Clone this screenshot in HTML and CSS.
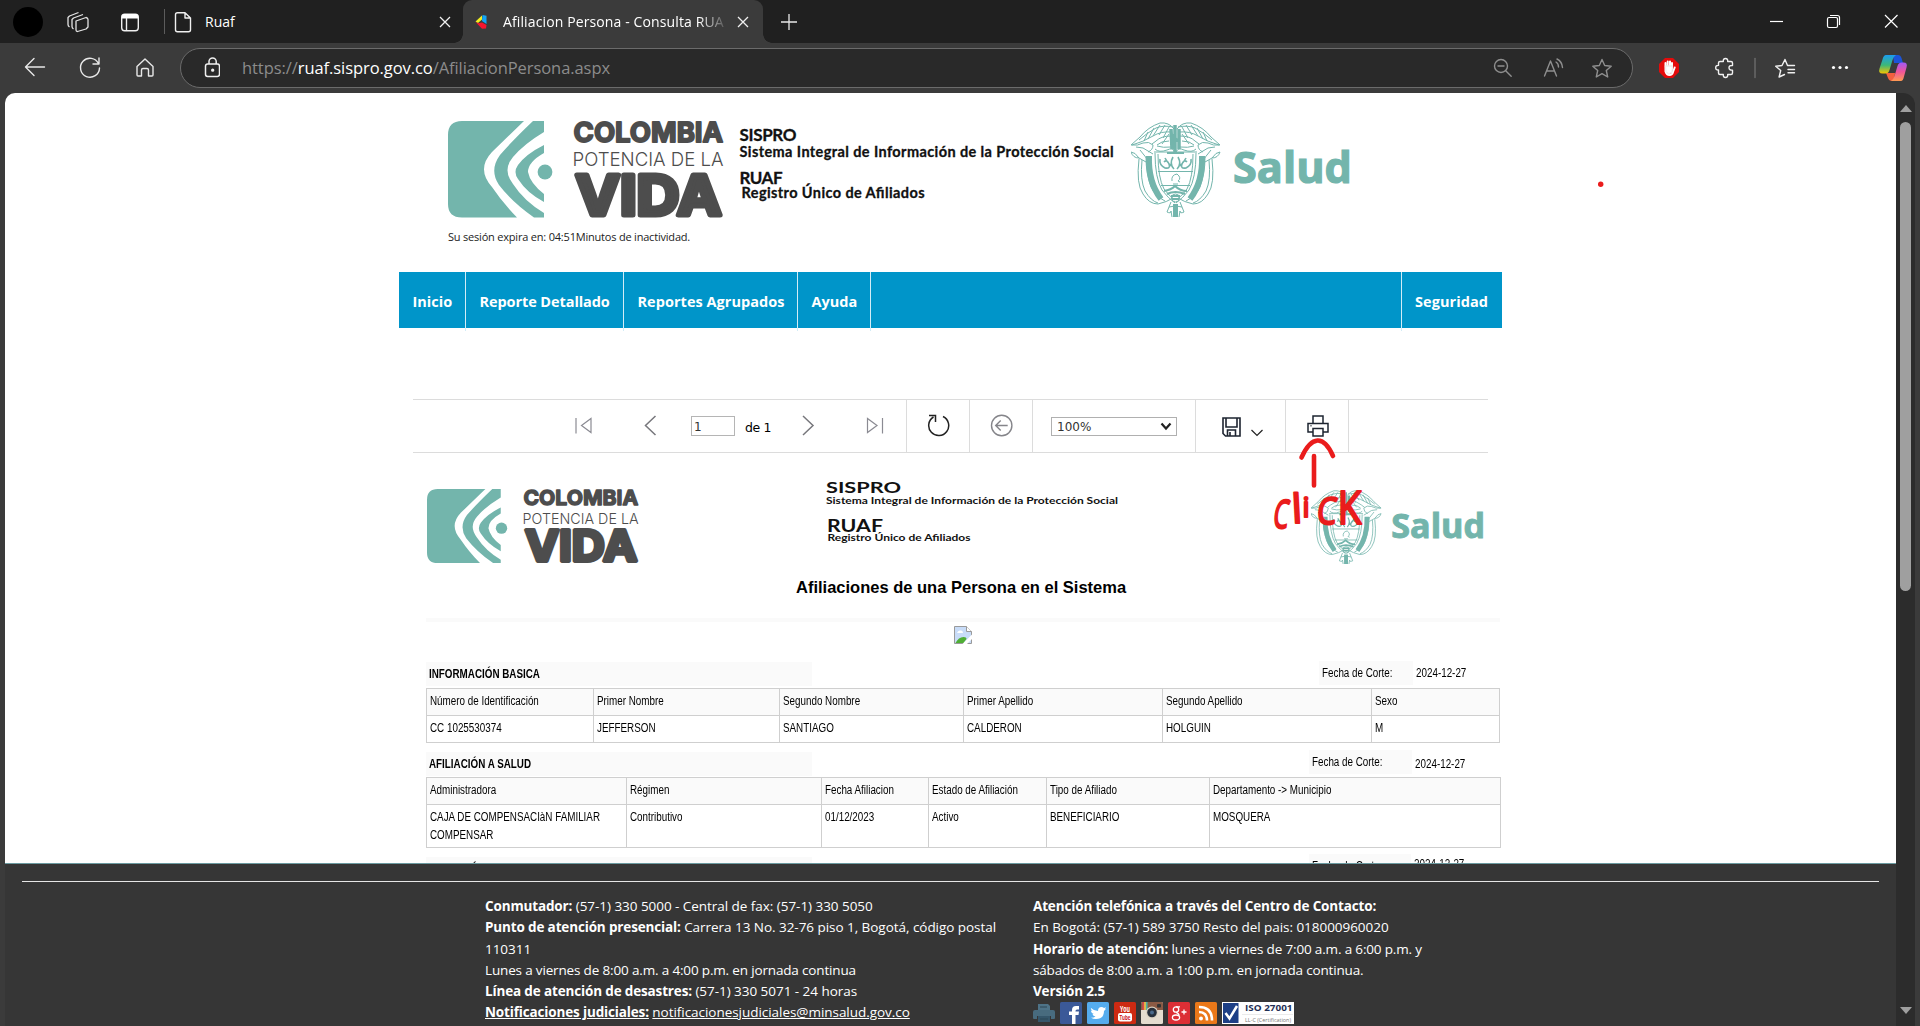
FILE: index.html
```html
<!DOCTYPE html>
<html lang="es">
<head>
<meta charset="utf-8">
<title>Afiliacion Persona - Consulta RUAF</title>
<link rel="stylesheet" href="styles.css">
</head>
<body>
<svg class="defs" width="0" height="0">
  <symbol id="logo-vida" viewBox="0 0 276 97">
    <g fill="#73b5ac">
      <path d="M14 0H76L44 31Q28 48 44 66Q54 81 69 96.500H14Q0 96.500 0 83V14Q0 0 14 0Z"/>
      <path d="M96 0V11Q76 23 65 36Q54 49 65 63Q76 80 96 92V96.500H86Q64 81 51 64Q41 49 52 34Q64 20 85 0Z"/>
      <path d="M96 24V32Q80 41 80 51Q82 62 96 73V81Q79 72 70 58Q65 51 70 44Q78 33 96 24Z"/>
      <circle cx="97" cy="51" r="7.400"/>
    </g>
    <g class="logo-text">
      <text class="lt-heavy" x="125.600" y="20.800" font-size="27" textLength="149.500" lengthAdjust="spacingAndGlyphs" stroke-width="1.800">COLOMBIA</text>
      <text class="lt-light" x="124.500" y="45.300" font-size="19.300" textLength="151" lengthAdjust="spacingAndGlyphs">POTENCIA DE LA</text>
      <text class="lt-heavy" x="127.500" y="94.300" font-size="54.500" textLength="146" lengthAdjust="spacingAndGlyphs" stroke-width="5">VIDA</text>
    </g>
  </symbol>
  <symbol id="logo-salud" viewBox="0 0 221 95">
    <g fill="none" stroke="#73b5ac" stroke-width="1">
      <g id="emb-half">
        <path d="M43 7Q38 0 29 1Q17 5 9 15L0 23Q7 24 12 21Q18 19 22 23Q22 28 17 30M41 10Q30 9 22 14Q12 20 1 23M42 5Q32 3 25 6Q16 11 8 18M40 14Q30 14 25 19L21 22M38 19Q30 19 26 23M26 24Q32 26 40 25M34 3L28 13M29 3L22 14M23 6L17 17M38 5L32 16M17 10L13 19M38 12L31 22"/>
        <path d="M24 27Q28 31 36 28Q42 25 44 30M23 30H44"/>
        <path d="M0 30Q4 30 8 36Q2 36 0 30ZM8 36L15 40M5 25L12 26L22 32M9 28L17 38"/>
        <path d="M8 37Q5 62 12 72Q18 82 27 82Q36 80 42 76M11 38Q9 58 14 69Q20 79 27 81"/>
        <path d="M15 35Q15 52 20 65Q24 74 34 79" />
        <path d="M18 34Q17 60 30 77" stroke-width="6"/>
        <path d="M24 31Q24 56 31 68Q37 76 44 81M27 32Q27 56 33 67Q38 74 44 78"/>
        <path d="M29 37Q28 43 34 46Q40 47 38 42Q36 37 33 40M42 35Q38 42 43 47M34 36Q36 40 40 44" stroke-width="1.600"/>
        <path d="M40 80L36 90Q40 92 40 89L41 95M38 85L44 84"/>
      </g>
      <use href="#emb-half" transform="translate(89 0) scale(-1 1)"/>
      <path d="M27 49.500H62M30 63.500H59M41 59Q40 53 46 52Q51 56 47 59L49 60M42 62H47"/>
      <path d="M33 69Q40 68 44 64Q49 69 56 69M36 72Q44 68 54 72" stroke-width="2"/>
      <circle cx="44.500" cy="76" r="4"/>
      <path d="M44.500 82V95" stroke-width="5"/>
      <path d="M40 74H49M41 77H48M36 31H53" stroke-width="2"/>
      <path d="M40 7L41 27M44 3V32M48 7L48 27M42 12L46 20" stroke-width="3.500"/>
    </g>
    <text class="salud-text" x="102" y="61" font-size="43" textLength="119" lengthAdjust="spacingAndGlyphs">Salud</text>
  </symbol>
</svg>

<div class="window">
  <header class="tabstrip">
    <span class="avatar"></span>
    <svg class="ic" width="24" height="42" viewBox="66 0 24 42"><g fill="none" stroke="#e4e4e4" stroke-width="1.300" stroke-linejoin="round"><path d="M76 20L86 16.500Q88 17 88 18.500V26L86 28L77.500 30.500Q76 30.500 76 29Z"/><path d="M73.500 28Q72 27 72 25.500V18.500L73.500 17L83 13.500"/><path d="M69.500 26Q68 25 68 23.500V16.500L69.500 15L78.500 11.500"/></g></svg>
    <svg class="ic" width="20" height="42" viewBox="120 0 20 42"><rect x="121.700" y="13.200" width="16.600" height="16.600" rx="3" fill="none" stroke="#f0f0f0" stroke-width="1.400"/><path d="M121.700 17.500V16q0-3 3-3h10.600q3 0 3 3v1.500z" fill="#fff"/><path d="M126.500 17v13" stroke="#f0f0f0" stroke-width="1.400"/></svg>
    <i class="strip-sep"></i>
    <div class="tab tab-idle">
      <svg width="18" height="22" viewBox="174 11 18 22"><path d="M185 12.700h-7.500q-2 0-2 2v15q0 2 2 2h11q2 0 2-2V18zM185 12.700V18h5.500" fill="none" stroke="#f0f0f0" stroke-width="1.400" stroke-linejoin="round"/></svg>
      <span class="tab-title">Ruaf</span>
      <svg class="x" width="12" height="12" viewBox="0 0 12 12"><path d="M1 1l10 10M11 1L1 11" stroke="#f0f0f0" stroke-width="1.300"/></svg>
    </div>
    <div class="tab tab-active">
      <svg width="14" height="16" viewBox="0 0 14 16"><path d="M8 1.500L1.500 7.500 4 9l4-3.500z" fill="#f0ee20"/><path d="M8.500 1L12.500 1.800V10L8 7z" fill="#12a5f5"/><path d="M1.500 8L4 9.300 8 8.500l4.500 2.500-.5 3.500-4 .3z" fill="#f5152f"/></svg>
      <span class="tab-title fade">Afiliacion Persona - Consulta RUA</span>
      <svg class="x" width="12" height="12" viewBox="0 0 12 12"><path d="M1 1l10 10M11 1L1 11" stroke="#f0f0f0" stroke-width="1.300"/></svg>
    </div>
    <svg class="plus" width="18" height="18" viewBox="0 0 18 18"><path d="M9 1v16M1 9h16" stroke="#e8e8e8" stroke-width="1.300"/></svg>
    <svg class="winbtns" width="132" height="16" viewBox="0 0 132 16" fill="none" stroke="#fff" stroke-width="1.200"><path d="M1 7.500h13"/><rect x="58.500" y="3.500" width="10" height="10" rx="1.500"/><path d="M61 1.500h7.500q2 0 2 2V11"/><path d="M116 1l12.500 12.500M128.500 1L116 13.500"/></svg>
  </header>

  <div class="toolbar">
    <svg class="navbtns" width="140" height="26" viewBox="20 54 140 26" fill="none" stroke="#e8e8e8" stroke-width="1.400" stroke-linecap="round" stroke-linejoin="round"><path d="M44.500 67H25.500M34 58.500L25.500 67l8.500 8.500"/><path d="M98.500 63.500A9.500 9.500 0 1 0 99.500 68M99 58v6h-6"/><path d="M137 66.500L145 59l8 7.500V75q0 1-1 1h-3.500v-6q0-1.500-1.500-1.500h-4q-1.500 0-1.500 1.500v6H138q-1 0-1-1z"/></svg>
    <div class="address">
      <svg width="16" height="22" viewBox="203.500 57 16 22" fill="none" stroke="#f0f0f0" stroke-width="1.500"><rect x="205" y="64" width="14" height="12.500" rx="2.200"/><path d="M208.500 64v-2.500a3.600 3.600 0 0 1 7.200 0V64"/><circle cx="212.200" cy="70.200" r=".9" fill="#fff"/></svg>
      <span class="url">https://<b>ruaf.sispro.gov.co</b>/AfiliacionPersona.aspx</span>
      <svg class="addr-icons" width="120" height="22" viewBox="1492 57 120 22" fill="none" stroke="#8f8f8f" stroke-width="1.400" stroke-linecap="round" stroke-linejoin="round"><circle cx="1501" cy="66" r="6.500"/><path d="M1498 66h6M1505.700 70.700l5.500 5.500"/><path d="M1544.500 76l6-15 6 15M1546.500 71h8M1556 62q2.500 1.500 2.500 5M1557 59q5 2.500 5.500 8.500"/><path d="M1602 59.500l2.700 6 6.500.7-4.900 4.300 1.400 6.500-5.700-3.300-5.700 3.300 1.400-6.500-4.900-4.300 6.500-.7z"/></svg>
    </div>
    <svg class="exts" width="252" height="30" viewBox="1656 53 252 30" fill="none" stroke="#f0f0f0" stroke-width="1.400" stroke-linecap="round" stroke-linejoin="round">
      <path d="M1665 58h8l6 6v8l-6 6h-8l-6-6v-8z" fill="#e30b0b" stroke="none"/>
      <path d="M1665.500 66v5.500q1 3.500 4 3.500 2.800 0 3.500-3l1.700-4.500M1665.500 67v-4M1667.700 68v-6.500M1670 68v-6.500M1672 68v-5" stroke="#fff" stroke-width="2"/><path d="M1665.500 66h7l-.5 6-3 2-3-2z" fill="#fff"/>
      <path d="M1720 61.500h3.300q-.3-3 2.200-3t2.200 3h3.300q1.500 0 1.500 1.500v2.500q-3.500-.3-3.500 2.300t3.500 2.300V73q0 1.500-1.500 1.500h-3.300q.3 3-2.200 3t-2.200-3H1720q-1.500 0-1.500-1.500v-3q-2.800.2-2.800-2.300t2.800-2.300V63q0-1.500 1.500-1.500z"/>
      <path d="M1755 58.500v19" stroke="#666" stroke-width="1.600"/>
      <path d="M1791 65.500h-3.500l-2.500-6-3 6-6.300.7 5 4.300-1.600 6.500 5.400-2.500M1788 69.500h6.500M1788 72.800h6.500M1788 65.500h6.500"/>
      <g fill="#fff" stroke="none"><circle cx="1833.500" cy="67.500" r="1.600"/><circle cx="1840" cy="67.500" r="1.600"/><circle cx="1846.500" cy="67.500" r="1.600"/></g>
      <g stroke="none">
        <linearGradient id="cp1" x1="0" y1="0" x2="0" y2="1"><stop offset="0" stop-color="#1b9cf0"/><stop offset=".55" stop-color="#3cb878"/><stop offset="1" stop-color="#f5c400"/></linearGradient>
        <linearGradient id="cp2" x1="0" y1="0" x2="0" y2="1"><stop offset="0" stop-color="#a259f7"/><stop offset=".5" stop-color="#f0559a"/><stop offset="1" stop-color="#ff9a52"/></linearGradient>
        <path d="M1893 55h5q2.500 0 3.500 3l1.500 5h-9z" fill="#1c54d8"/>
        <path d="M1886 73h9l-1 8h-2q-3 0-4-3z" fill="#f3603e"/>
        <path d="M1885 55h11q-2.500 1.500-3.500 5l-3 10q-1 3.500-4 3.500h-3q-4.500 0-3-5l3-9q1-4.500 3.500-4.500z" fill="url(#cp1)"/>
        <path d="M1901 81h-10q2.500-1.500 3.500-5l3-10q1-3.500 4-3.500h2q4.500 0 3 5l-2.500 9q-1 4.500-3 4.500z" fill="url(#cp2)"/>
      </g>
    </svg>
  </div>

  <div class="viewport">
    <main class="page">
      <div class="content">
        <div class="banner">
          <svg class="b-vida" width="276" height="97"><use href="#logo-vida"/></svg>
          <svg class="b-text" width="376" height="97" viewBox="739 120 376 97"><text x="739.500" y="140.300" font-size="17" textLength="57">SISPRO</text><text x="739.500" y="155.800" font-size="14.500" textLength="374">Sistema Integral de Información de la Protección Social</text><text x="739.500" y="182.500" font-size="17" textLength="43">RUAF</text><text x="741.500" y="197.400" font-size="14.500" textLength="183">Registro Único de Afiliados</text></svg>
          <svg class="b-salud" width="221" height="95"><use href="#logo-salud"/></svg>
        </div>
        <p class="session">Su sesión expira en: 04:51Minutos de inactividad.</p>
        <nav class="menu">
          <a>Inicio</a><a>Reporte Detallado</a><a>Reportes Agrupados</a><a>Ayuda</a><span></span><a class="last">Seguridad</a>
        </nav>

        <div class="rv-bar">
          <div class="rv-group pages">
            <svg width="18" height="20" viewBox="575 416 18 20" fill="none" stroke="#8b8b93" stroke-width="1.200"><path d="M576 418v15.500M591 418.500v14l-9.500-7z"/></svg>
            <svg width="14" height="22" viewBox="644 415 14 22" fill="none" stroke="#77777c" stroke-width="1.500"><path d="M655.500 416L645.500 425.500l10 9.500"/></svg>
            <span class="page-input">1</span>
            <span class="page-of">de 1</span>
            <svg width="14" height="22" viewBox="801 415 14 22" fill="none" stroke="#77777c" stroke-width="1.500"><path d="M803 416L813 425.500l-10 9.500"/></svg>
            <svg width="18" height="20" viewBox="866 416 18 20" fill="none" stroke="#8b8b93" stroke-width="1.200"><path d="M882.500 418v15.500M867.500 418.500v14l9.500-7z"/></svg>
          </div>
          <div class="rv-group"><svg width="24" height="24" viewBox="925.500 414.500 24 24" fill="none" stroke="#222" stroke-width="1.500"><path d="M942.500 417A10 10 0 1 1 933 417.500M928.500 416h6.500v6.500" /></svg></div>
          <div class="rv-group"><svg width="24" height="24" viewBox="989.300 414 24 24" fill="none" stroke="#85858a" stroke-width="1.400"><circle cx="1002" cy="425.500" r="10.200"/><path d="M1008 425.500H996M1001 420.500l-5 5 5 5"/></svg></div>
          <div class="rv-group"><span class="zoom-select">100%<svg width="12" height="9" viewBox="0 0 12 9"><path d="M1.500 1.500L6 6.500l4.500-5" fill="none" stroke="#222" stroke-width="2.200"/></svg></span></div>
          <div class="rv-group save"><svg width="19" height="20" viewBox="0 0 19 20" fill="none" stroke="#1d2430" stroke-width="1.600"><path d="M1 1h17v18H3.500L1 16.500zM4 1v9h11V1M5.500 19v-6h8v6M8 15v4"/></svg><svg class="caret" width="12" height="8" viewBox="0 0 12 8"><path d="M.5 1L6 6.500 11.500 1" fill="none" stroke="#222" stroke-width="1.200"/></svg></div>
          <div class="rv-group print"><svg width="22" height="22" viewBox="0 0 22 22" fill="none" stroke="#1d2430" stroke-width="1.500"><path d="M6 8V1h10v7M6 17H1V8.500h20V17h-5M6 13.500h10V21H6zM3.500 10.800h1"/></svg></div>
          <div class="rv-group end"></div>
        </div>

        <section class="report">
          <div class="r-head">
            <svg class="r-vida" width="212" height="74.500"><use href="#logo-vida"/></svg>
            <svg class="r-text" width="294" height="66" viewBox="825 480 294 66"><text x="826" y="493.300" font-size="15.500" textLength="75" lengthAdjust="spacingAndGlyphs">SISPRO</text><text x="826" y="504.300" font-size="9.500" textLength="292" lengthAdjust="spacingAndGlyphs">Sistema Integral de Información de la Protección Social</text><text x="827" y="532.300" font-size="16.500" textLength="56" lengthAdjust="spacingAndGlyphs">RUAF</text><text x="827.500" y="541.300" font-size="9.500" textLength="143" lengthAdjust="spacingAndGlyphs">Registro Único de Afiliados</text></svg>
            <svg class="r-salud" width="174" height="74.800"><use href="#logo-salud"/></svg>
          </div>
          <h1>Afiliaciones de una Persona en el Sistema</h1>
          <div class="band"></div>
          <svg class="broken" width="18" height="18" viewBox="0 0 18 18"><path d="M.5.500h12l5 5v12H.5z" fill="#c8dcf8" stroke="#9a9a9a"/><path d="M1.500 17q3-6 8-6 3 0 3 2l-3 4z" fill="#4fae35"/><path d="M3 7q1-3 3.500-2.500Q9 4 9 7z" fill="#fff"/><path d="M12.500.500v5h5" fill="#fff" stroke="#9a9a9a"/><path d="M8.500 18L18 8.500V13l-5 5z" fill="#fff"/></svg>

          <div class="sec s1"><h2><span>INFORMACIÓN BASICA</span></h2><p class="cut"><span>Fecha de Corte:</span></p><p class="date"><span>2024-12-27</span></p></div>
          <div class="grid g1">
            <div class="hd"><span>Número de Identificación</span></div><div class="hd"><span>Primer Nombre</span></div><div class="hd"><span>Segundo Nombre</span></div><div class="hd"><span>Primer Apellido</span></div><div class="hd"><span>Segundo Apellido</span></div><div class="hd"><span>Sexo</span></div>
            <div><span>CC 1025530374</span></div><div><span>JEFFERSON</span></div><div><span>SANTIAGO</span></div><div><span>CALDERON</span></div><div><span>HOLGUIN</span></div><div><span>M</span></div>
          </div>
          <div class="sec s2"><h2><span>AFILIACIÓN A SALUD</span></h2><p class="cut"><span>Fecha de Corte:</span></p><p class="date"><span>2024-12-27</span></p></div>
          <div class="grid g2">
            <div class="hd"><span>Administradora</span></div><div class="hd"><span>Régimen</span></div><div class="hd"><span>Fecha Afiliacion</span></div><div class="hd"><span>Estado de Afiliación</span></div><div class="hd"><span>Tipo de Afiliado</span></div><div class="hd"><span>Departamento -&gt; Municipio</span></div>
            <div><span>CAJA DE COMPENSACIàN FAMILIAR<br>COMPENSAR</span></div><div><span>Contributivo</span></div><div><span>01/12/2023</span></div><div><span>Activo</span></div><div><span>BENEFICIARIO</span></div><div><span>MOSQUERA</span></div>
          </div>
          <div class="sec s3"><h2><span>AFILIACIÓN A PENSIONES</span></h2><p class="cut"><span>Fecha de Corte:</span></p><p class="date"><span>2024-12-27</span></p></div>
        </section>
      </div>

      <footer class="footer">
        <hr>
        <div class="f-cols">
          <div class="f-left">
            <p><b>Conmutador:</b> (57-1) 330 5000 - Central de fax: (57-1) 330 5050</p>
            <p><b>Punto de atención presencial:</b> Carrera 13 No. 32-76 piso 1, Bogotá, código postal</p>
            <p>110311</p>
            <p class="tight">Lunes a viernes de 8:00 a.m. a 4:00 p.m. en jornada continua</p>
            <p><b>Línea de atención de desastres:</b> (57-1) 330 5071 - 24 horas</p>
            <p><u><b>Notificaciones judiciales:</b></u> <u>notificacionesjudiciales@minsalud.gov.co</u></p>
          </div>
          <div class="f-right">
            <p><b>Atención telefónica a través del Centro de Contacto:</b></p>
            <p>En Bogotá: (57-1) 589 3750 Resto del pais: 018000960020</p>
            <p><b>Horario de atención:</b> <span class="tight">lunes a viernes de 7:00 a.m. a 6:00 p.m. y</span></p>
            <p class="tight">sábados de 8:00 a.m. a 1:00 p.m. en jornada continua.</p>
            <p><b>Versión 2.5</b></p>
            <div class="social">
              <svg viewBox="0 0 22 22"><path d="M5 2h10l2 2v4H5z" fill="#4e7388"/><path d="M2 8h18q2 0 2 2v6q0 1-1 1h-3v-3H4v3H1q-1 0-1-1v-6q0-2 2-2z" fill="#486b7e"/><path d="M5 14h12v6H5z" fill="#35566a"/><path d="M7 5h7M7 17h8" stroke="#2c4655"/></svg>
              <svg viewBox="0 0 22 22"><rect width="22" height="22" rx="1.500" fill="#3b5998"/><path d="M12 22v-9H9V9.500h3V8q0-4 4-4h3v3.500h-2q-1.500 0-1.500 1.500v.5H19l-.5 3.500h-3v9z" fill="#fff"/></svg>
              <svg viewBox="0 0 22 22"><rect width="22" height="22" rx="1.500" fill="#55acee"/><path d="M4 6q3 3 7 3 0-4 3.500-4 1.500 0 2.500 1l2-.7-1 2 1-.3-2 2q0 8-8 8-3 0-5-1.200 3 0 4.500-1.300-2.500-.5-3-2.500h1.500Q4 11 4 8.500l1.500.5Q3.500 7.500 4 6z" fill="#fff"/></svg>
              <svg viewBox="0 0 22 22"><rect width="22" height="22" rx="1.500" fill="#cd2a12"/><rect x="4" y="11" width="14" height="8.500" rx="2" fill="#fff"/><text x="6" y="9.500" font-size="8.500" textLength="10" lengthAdjust="spacingAndGlyphs" fill="#fff">You</text><text x="5.500" y="18" font-size="7.500" textLength="11" lengthAdjust="spacingAndGlyphs" fill="#cd201f">Tube</text></svg>
              <svg viewBox="0 0 22 22"><rect width="22" height="22" rx="1.500" fill="#e4dccf"/><path d="M0 8V1.500Q0 0 1.500 0h19Q22 0 22 1.500V8z" fill="#8b5a44"/><path d="M1.500 0h1.700v8H1.500z" fill="#e04848"/><path d="M3.200 0h1.700v8H3.200z" fill="#f0c84a"/><path d="M4.900 0h1.700v8H4.900z" fill="#4fb0a0"/><circle cx="11" cy="10.500" r="6" fill="#d8cfc0"/><circle cx="11" cy="10.500" r="4.800" fill="#26303c"/><circle cx="11" cy="10.500" r="2" fill="#4a6a8c"/><rect x="16" y="2" width="4" height="3.500" rx="1" fill="#333"/></svg>
              <svg viewBox="0 0 22 22"><rect width="22" height="22" rx="1.500" fill="#dc2f35"/><g fill="none" stroke="#fff" stroke-width="1.300"><circle cx="8" cy="7.500" r="2.700"/><ellipse cx="8" cy="15.500" rx="3.600" ry="2.500"/><path d="M8 4.800h4M8 10.300q3 1 3 3M13.500 10h5M16 7.500v5"/></g></svg>
              <svg viewBox="0 0 22 22"><rect width="22" height="22" rx="1.500" fill="#ea7819"/><circle cx="6" cy="16.500" r="2" fill="#fff"/><path d="M4 10q8 0 8 8.500M4 5q13 0 13 13.500" fill="none" stroke="#fff" stroke-width="2.600"/></svg>
              <svg class="iso" viewBox="0 0 72 22"><rect width="72" height="22" fill="#fff"/><rect x="1" y="1" width="15.500" height="20" fill="#1d3f86"/><path d="M3.500 11l4 5.500L15 4" fill="none" stroke="#fff" stroke-width="2.500"/><text x="23" y="8.700" font-size="9" textLength="47.500" lengthAdjust="spacingAndGlyphs" fill="#1f2f55">ISO 27001</text><path d="M20 12.500h51" stroke="#ddd" stroke-width=".6"/><text class="iso-s" x="23" y="19.500" font-size="5.500" textLength="46" lengthAdjust="spacingAndGlyphs" fill="#777">LL-C (Certification)</text></svg>
            </div>
          </div>
        </div>
      </footer>
    </main>
    <div class="scroll"><i class="up"></i><i class="thumb"></i><i class="down"></i></div>
  </div>

  <svg class="ink" width="340" height="360" viewBox="1265 175 340 360"><circle cx="1600.700" cy="184.300" r="2.700" fill="#ea1c1c"/><g fill="none" stroke="#ea1c1c" stroke-width="4.600" stroke-linecap="round"><path d="M1301.500 457.500Q1309 441 1317.500 440.500Q1326 440 1333 456M1314 456V485.500"/></g><g class="ink-text"><text transform="translate(1272 527.500) skewX(-8) scale(.62 1)" font-size="39">C</text><text transform="translate(1292.500 522.500) skewX(3)" font-size="40">l</text><text x="1302.500" y="517" font-size="28">i</text><text transform="translate(1316 524) skewX(-6) scale(.84 1)" font-size="37">C</text><text transform="translate(1337.500 524) scale(.85 1)" font-size="46">K</text></g></svg>
</div>
</body>
</html>
```
FILE: styles.css
```css
* { box-sizing: border-box; }
body { margin: 0; background: #3b3b3b; font-family: "Segoe UI", "Open Sans", "Noto Sans", sans-serif; }
p, h1, h2 { margin: 0; }
.defs { position: absolute; }
.window { position: relative; width: 1920px; height: 1026px; overflow: hidden; display: flex; flex-direction: column; background: #3b3b3b; }

/* tab strip */
.tabstrip { position: relative; height: 43px; background: #202020; display: flex; align-items: center; flex: none; }
.avatar { width: 30px; height: 30px; border-radius: 50%; background: #000; margin-left: 13px; }
.ic { margin-left: 23px; }
.ic + .ic { margin-left: 30px; }
.strip-sep { width: 1px; height: 25px; background: #5c5c5c; margin-left: 24px; }
.tab { display: flex; align-items: center; height: 43px; color: #fff; font-size: 14px; }
.tab-title { flex: 1; white-space: nowrap; overflow: hidden; margin-top: -1px; }
.tab-idle { width: 298px; padding: 0 12px 0 9px; }
.tab-idle .tab-title { margin-left: 13px; }
.tab-active { position: relative; width: 300px; padding: 0 14px 0 11px; background: #3b3b3b; border-radius: 9px 9px 0 0; }
.tab-active .tab-title { margin: -1px 12px 0 15px; letter-spacing: .12px; }
.tab-active::before, .tab-active::after { content: ""; position: absolute; bottom: 0; width: 9px; height: 9px; }
.tab-active::before { left: -9px; background: radial-gradient(circle at 0 0, transparent 8.5px, #3b3b3b 9px); }
.tab-active::after { right: -9px; background: radial-gradient(circle at 100% 0, transparent 8.5px, #3b3b3b 9px); }
.fade { -webkit-mask-image: linear-gradient(90deg, #000 88%, transparent 102%); mask-image: linear-gradient(90deg, #000 88%, transparent 102%); }
.plus { margin-left: 17px; }
.winbtns { margin-left: auto; margin-right: 19px; }

/* toolbar */
.toolbar { height: 50px; flex: none; display: flex; align-items: center; padding: 0 12px 0 20px; }
.navbtns { margin-top: -2px; }
.address { width: 1453px; height: 40px; margin-left: 20px; border: 1px solid #6b6b6b; border-radius: 20px; background: #292929; display: flex; align-items: center; padding: 0 20px 0 23px; }
.url { margin: -2px 0 0 22px; font-size: 16.500px; letter-spacing: -.07px; color: #8c8c8c; white-space: nowrap; }
.url b { font-weight: 400; color: #fff; }
.addr-icons { margin-left: auto; }
.exts { margin-left: 23px; }

/* page */
.viewport { flex: 1; display: flex; padding: 0 5px; min-height: 0; }
.page { width: 1891px; display: flex; flex-direction: column; background: #fff; border-radius: 10px 0 0 0; overflow: hidden; }
.content { height: 770px; overflow: hidden; padding-left: 394px; flex: none; }
.scroll { width: 19px; background: #2c2c2c; border-radius: 0 12px 0 0; display: flex; flex-direction: column; align-items: center; padding: 12px 0 12px; }
.up, .down { border: 6.500px solid transparent; border-top-width: 0; border-bottom: 7px solid #9f9f9f; }
.down { border-bottom: 0; border-top: 7px solid #9f9f9f; margin-top: auto; }
.thumb { width: 11px; height: 469px; margin-top: 10px; border-radius: 6px; background: #9f9f9f; }

.banner { display: flex; height: 130px; padding: 27.500px 0 0 49px; align-items: flex-start; }
.b-text { margin-left: 15px; }
.b-text text, .r-text text { font-family: Lato, "Noto Sans", sans-serif; font-weight: 700; fill: #111; }
.b-text text { stroke: #111; stroke-width: .3px; }
.b-salud { margin: 1px 0 0 16px; }
.logo-text { font-family: Inter, "Noto Sans", sans-serif; fill: #4d4d4d; stroke: #4d4d4d; stroke-linejoin: round; }
.lt-heavy { font-weight: 700; }
.lt-light { font-weight: 300; stroke: none; }
.salud-text { font-family: "Open Sans", "Noto Sans", sans-serif; font-weight: 700; fill: #73b5ac; stroke: #73b5ac; stroke-width: 1.2px; }
.session { font-size: 11px; letter-spacing: -.2px; line-height: 16px; height: 49px; padding: 6px 0 0 49px; color: #222; white-space: nowrap; }
.menu { width: 1103px; height: 56px; background: #0095c9; display: grid; grid-template-columns: 67px 158px 174px 73px 1fr 101px; align-items: stretch; }
.menu a { color: #fff; font-weight: 700; font-size: 14.500px; line-height: 59px; padding-left: 13.500px; border-right: 1px solid #d3ecf6; white-space: nowrap; }
.menu a:nth-child(2) { letter-spacing: -.08px; }
.menu a:nth-child(3) { letter-spacing: .04px; }
.menu a.last { border-right: 0; border-left: 1px solid #d3ecf6; padding-left: 13px; letter-spacing: .07px; }

/* report viewer bar */
.rv-bar { width: 1075px; height: 54px; margin: 71px 0 0 14px; border: solid #dcdcdc; border-width: 1px 0; display: grid; grid-template-columns: 494px 63px 63px 163px 90px 63px 1fr; }
.rv-group { border-right: 1px solid #dcdcdc; display: flex; align-items: center; justify-content: center; }
.rv-group.end { border: 0; }
.pages { justify-content: flex-start; padding-left: 162px; font: 12px "DejaVu Sans", sans-serif; }
.page-input { width: 44px; height: 20px; border: 1px solid #b5b5b5; margin: 0 10px 0 33px; padding-left: 2px; line-height: 20px; color: #333; }
.pages > svg:nth-of-type(2) { margin-left: 51px; }
.page-of { width: 46px; padding-top: 3px; font-size: 12.500px; letter-spacing: -.4px; }
.pages > svg:nth-of-type(3) { margin-left: 10px; }
.pages > svg:nth-of-type(4) { margin-left: 51px; }
.zoom-select { width: 126px; height: 19px; border: 1px solid #b0b0b0; display: flex; align-items: center; justify-content: space-between; padding: 0 4px 0 5px; font: 12px "DejaVu Sans", sans-serif; margin-top: 1px; color: #333; }
.save { justify-content: flex-start; padding: 1px 0 0 26px; }
.caret { margin: 12px 0 0 10px; }
.print { padding-left: 1px; }

/* report body */
.report { width: 1074px; margin-left: 27px; font: 12.500px/18px "Liberation Sans", Arial, sans-serif; color: #000; white-space: nowrap; }
.r-head { display: flex; align-items: flex-start; height: 120px; }
.r-vida { margin: 36px 0 0 .5px; }
.r-text { margin: 27px 0 0 186px; }
.r-text text { stroke: none; }
.r-salud { margin: 36.500px 0 0 192px; }
.report h1 { font-size: 16.500px; line-height: 20px; padding: 4px 0 0 370px; height: 45px; font-weight: 700; }
.band { height: 4px; background: #fafafa; }
.broken { display: block; margin: 4px 0 0 528px; }
.sec { display: grid; grid-template-columns: 386px 507px 94px 1fr; align-items: start; }
.sec h2 { background: #fafafa; height: 24px; padding: 3px 0 0 3px; font-size: 12.500px; line-height: 18px; }
.sec span, .grid span { display: inline-block; transform: scaleX(.787); transform-origin: 0 0; }
.cut { grid-column: 3; background: #fafafa; height: 24px; padding: 3px 0 0 3px; }
.date { grid-column: 4; padding: 3px 0 0 3px; }
.s1 { height: 27px; margin-top: 17px; }
.s1 h2 { margin-top: 1px; }
.s2 { grid-template-columns: 386px 497px 103px 1fr; height: 27px; margin-top: 7px; }
.s2 h2 { margin-top: 2px; }
.s2 .date { padding-top: 5px; }
.s3 { grid-template-columns: 386px 497px 102px 1fr; height: 27px; margin-top: 6px; }
.s3 h2 { margin-top: 3px; }
.s3 .date { padding-top: 1px; }
.grid { display: grid; border: solid #cfcfcf; border-width: 1px 0 0 1px; }
.grid > div { border: solid #cfcfcf; border-width: 0 1px 1px 0; padding: 2.500px 0 0 3px; }
.grid .hd { background: #fafafa; }
.g1 { width: 1074px; grid-template-columns: 167px 186px 184px 199px 209px 128px; grid-template-rows: 27px 27px; }
.g2 { width: 1075px; grid-template-columns: 200px 195px 107px 118px 163px 291px; grid-template-rows: 27px 43px; }

/* footer */
.footer { flex: 1; background: #363636; border-top: 1px solid #6b9aa0; color: #fff; font-size: 13.500px; letter-spacing: -.04px; line-height: 21.250px; }
.footer b { letter-spacing: -.15px; }
.footer .tight { letter-spacing: -.16px; }
.footer hr { margin: 17px 17px 0; height: 1px; border: 0; background: #e6e6e6; }
.f-cols { display: flex; padding: 14px 0 0 480px; white-space: nowrap; }
.f-left { width: 548px; }
.social { display: flex; gap: 5px; margin-top: -.5px; }
.social svg { width: 22px; height: 22px; }
.social .iso { width: 72px; }
.social text { font-family: "Open Sans", sans-serif; font-weight: 700; letter-spacing: 0; }
.social .iso-s { font-weight: 400; }

/* handwritten marks over the page */
.ink { position: absolute; left: 1265px; top: 175px; }
.ink-text { font-family: "Open Sans", "Noto Sans", sans-serif; fill: #ea1c1c; stroke: #ea1c1c; stroke-width: 2.2px; stroke-linejoin: round; }
```
